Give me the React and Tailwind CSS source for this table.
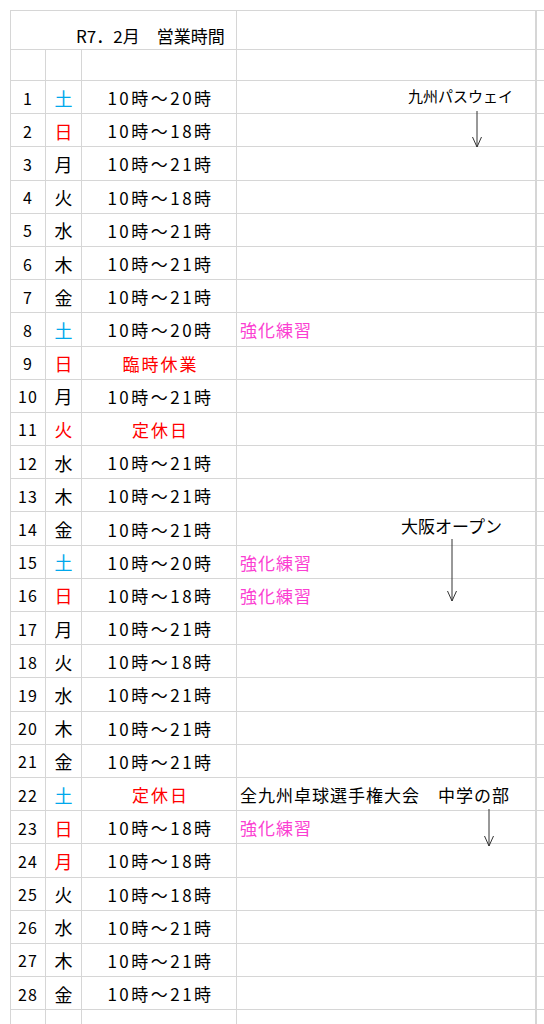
import React from 'react'

// 2月の営業時間表（エクセル風）
const BLUE = 'text-[#00a8ec]'
const RED = 'text-[#ff0000]'
const PINK = 'text-[#fb3fd2]'

const rows = [
  [1, '土', '10時～20時'],
  [2, '日', '10時～18時'],
  [3, '月', '10時～21時'],
  [4, '火', '10時～18時'],
  [5, '水', '10時～21時'],
  [6, '木', '10時～21時'],
  [7, '金', '10時～21時'],
  [8, '土', '10時～20時', '強化練習'],
  [9, '日', '臨時休業'],
  [10, '月', '10時～21時'],
  [11, '火', '定休日'],
  [12, '水', '10時～21時'],
  [13, '木', '10時～21時'],
  [14, '金', '10時～21時'],
  [15, '土', '10時～20時', '強化練習'],
  [16, '日', '10時～18時', '強化練習'],
  [17, '月', '10時～21時'],
  [18, '火', '10時～18時'],
  [19, '水', '10時～21時'],
  [20, '木', '10時～21時'],
  [21, '金', '10時～21時'],
  [22, '土', '定休日', '全九州卓球選手権大会　中学の部'],
  [23, '日', '10時～18時', '強化練習'],
  [24, '月', '10時～18時'],
  [25, '火', '10時～18時'],
  [26, '水', '10時～21時'],
  [27, '木', '10時～21時'],
  [28, '金', '10時～21時'],
]

const redDays = [11, 24]

function dayColor(d, day) {
  if (redDays.includes(d)) return RED
  if (day === '土') return BLUE
  if (day === '日') return RED
  return 'text-black'
}

function hoursColor(h) {
  return h.includes('時～') ? 'text-black tracking-[2.5px]' : `${RED} tracking-[2px]`
}

function Arrow({ x, y, len }) {
  return (
    <svg className="absolute" style={{ left: x - 6, top: y }} width="12" height={len + 2} viewBox={`0 0 12 ${len + 2}`}>
      <path d={`M6 0 V${len} M1.5 ${len - 10} L6 ${len} L10.5 ${len - 10}`} stroke="#333" strokeWidth="1" fill="none" />
    </svg>
  )
}

const cell = 'border-b border-[#d6d6d6] flex items-center'

export default function App() {
  return (
    <div className="w-[544px] h-[1024px] overflow-hidden bg-white pt-[10px] pl-[10px] text-black text-[17px] leading-none [font-family:'Noto_Sans_CJK_JP','Noto_Sans',sans-serif]">
      <div className="relative border-t border-l border-[#d6d6d6] grid grid-cols-[35px_36px_155px_300px_1fr]">
        <div className={`${cell} border-r col-span-3 h-[39px] items-end pb-[5px] pl-[65px]`}>R7．2月　営業時間</div>
        <div className={`${cell} h-[39px] border-r-2`} />
        <div className={`${cell} h-[39px]`} />

        <div className={`${cell} border-r h-[31px]`} />
        <div className={`${cell} border-r h-[31px]`} />
        <div className={`${cell} border-r h-[31px]`} />
        <div className={`${cell} h-[31px] border-r-2`} />
        <div className={`${cell} h-[31px]`} />

        {rows.map(([d, day, hours, note]) => (
          <React.Fragment key={d}>
            <div className={`${cell} border-r h-[33.2px] justify-center pt-[1px] text-[16px] tracking-[1px]`}>{d}</div>
            <div className={`${cell} border-r h-[33.2px] justify-center pt-[1px] text-[18px] ${dayColor(d, day)}`}>{day}</div>
            <div className={`${cell} border-r h-[33.2px] justify-center pt-[1px] pl-[3px] ${hoursColor(hours)}`}>{hours}</div>
            <div className={`${cell} h-[33.2px] border-r-2 pl-[3px] pt-[1px] ${note === '強化練習' ? `${PINK} tracking-[1px]` : 'tracking-[1px]'}`}>{note}</div>
            <div className={`${cell} h-[33.2px]`} />
          </React.Fragment>
        ))}
        <div className={`${cell} border-r h-[33.2px]`} />
        <div className={`${cell} border-r h-[33.2px]`} />
        <div className={`${cell} border-r h-[33.2px]`} />
        <div className={`${cell} h-[33.2px] border-r-2`} />
        <div className={`${cell} h-[33.2px]`} />

        <div className="absolute left-[397px] top-[77px] text-[15px]">九州パスウェイ</div>
        <Arrow x={466} y={100} len={36} />
        <div className="absolute left-[390px] top-[506px]">大阪オープン</div>
        <Arrow x={441} y={528} len={62} />
        <Arrow x={478} y={798} len={37} />
      </div>
    </div>
  )
}
